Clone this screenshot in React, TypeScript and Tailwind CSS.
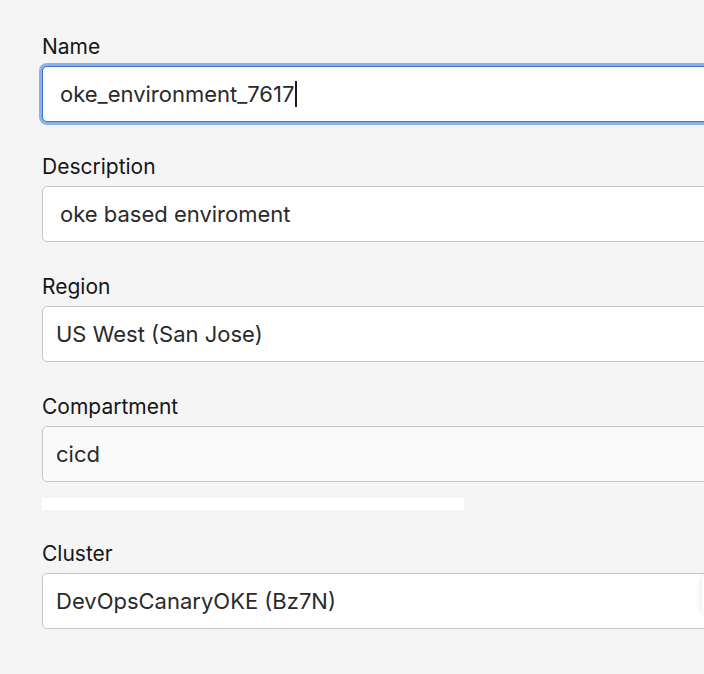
import React from 'react'

const font = { fontFamily: 'Inter, "Noto Sans", sans-serif' }

function Field({
  label,
  value,
  focused,
  muted,
  inset = 'pl-[17px]',
  caret,
}: {
  label: string
  value: string
  focused?: boolean
  muted?: boolean
  inset?: string
  caret?: boolean
}) {
  return (
    <div className="flex flex-col">
      <label className="h-[30px] text-[21px] leading-[32px] text-[#161616]">{label}</label>
      <div
        className={
          'mt-[5px] flex h-[56px] w-[720px] items-center rounded-[5px] ' +
          inset +
          ' ' +
          (focused
            ? 'border border-[#3a72cc] bg-white shadow-[0_0_0_3px_#8cb0e8]'
            : muted
              ? 'border border-[#c4c6cb] bg-[#fafafa]'
              : 'border border-[#c4c6cb] bg-white')
        }
      >
        <span className="text-[22px] text-[#2a2a2a]">{value}</span>
        {caret && <span className="ml-[1px] h-[26px] w-[2px] bg-[#1a1a1a]" />}
      </div>
    </div>
  )
}

export default function App() {
  return (
    <div className="h-[674px] w-[704px] overflow-hidden bg-[#f5f5f5]" style={font}>
      <div className="flex flex-col pl-[42px] pt-[31px]">
        <div className="flex flex-col gap-[29px]">
          <Field label="Name" value="oke_environment_7617" focused caret />
          <Field label="Description" value="oke based enviroment" />
          <Field label="Region" value="US West (San Jose)" inset="pl-[13px]" />
          <Field label="Compartment" value="cicd" muted inset="pl-[13px]" />
        </div>

        {/* redacted helper text */}
        <div className="mt-[16px] h-[12px] w-[422px] bg-white" />

        <div className="relative mt-[28px]">
          <Field label="Cluster" value="DevOpsCanaryOKE (Bz7N)" inset="pl-[13px]" />
          <div className="absolute left-[660px] top-[36px] h-[40px] w-[40px] rounded-[6px] bg-white shadow-[0_0_6px_rgba(0,0,0,0.12)]" />
        </div>
      </div>
    </div>
  )
}
